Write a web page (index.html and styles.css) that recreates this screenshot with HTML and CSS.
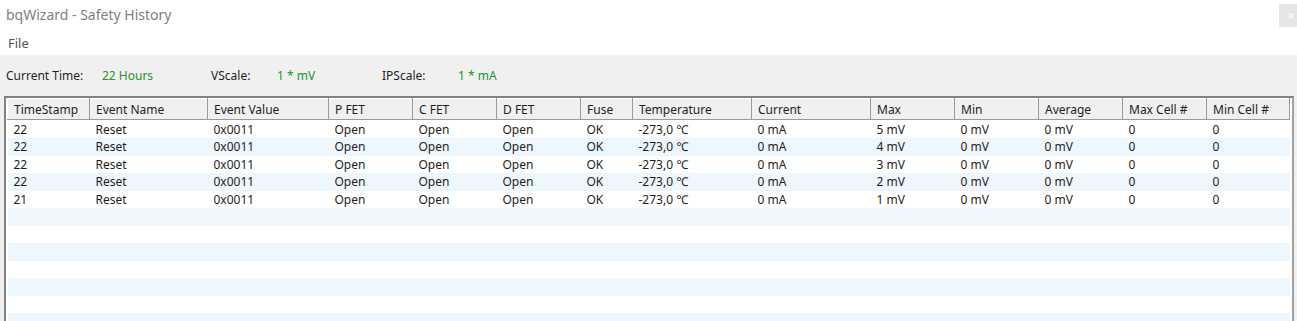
FILE: index.html
```html
<!DOCTYPE html>
<html lang="en">

<head>
  <meta charset="utf-8">
  <title>bqWizard - Safety History</title>
  <link rel="stylesheet" href="styles.css">
</head>

<body>
  <div class="titlebar">
    <span class="title">bqWizard - Safety History</span>
    <span class="close">&#x2715;</span>
  </div>
  <div class="menubar">
    <span>File</span>
  </div>
  <div class="panel">
    <div class="info">
      <span class="label l1">Current Time:</span><span class="value v1">22 Hours</span>
      <span class="label l2">VScale:</span><span class="value v2">1 * mV</span>
      <span class="label l3">IPScale:</span><span class="value">1 * mA</span>
    </div>
    <div class="grid">
      <table>
        <colgroup>
          <col style="width:82px"><col style="width:118px"><col style="width:121px">
          <col style="width:84px"><col style="width:84px"><col style="width:84px">
          <col style="width:52px"><col style="width:119px"><col style="width:119px">
          <col style="width:84px"><col style="width:84px"><col style="width:84px">
          <col style="width:84px"><col style="width:83px">
        </colgroup>
        <thead>
          <tr>
            <th>TimeStamp</th><th>Event Name</th><th>Event Value</th><th>P FET</th><th>C FET</th>
            <th>D FET</th><th>Fuse</th><th>Temperature</th><th>Current</th><th>Max</th>
            <th>Min</th><th>Average</th><th>Max Cell #</th><th>Min Cell #</th>
          </tr>
        </thead>
        <tbody>
          <tr><td>22</td><td>Reset</td><td>0x0011</td><td>Open</td><td>Open</td><td>Open</td><td>OK</td><td>-273,0 &#8451;</td><td>0 mA</td><td>5 mV</td><td>0 mV</td><td>0 mV</td><td>0</td><td>0</td></tr>
          <tr><td>22</td><td>Reset</td><td>0x0011</td><td>Open</td><td>Open</td><td>Open</td><td>OK</td><td>-273,0 &#8451;</td><td>0 mA</td><td>4 mV</td><td>0 mV</td><td>0 mV</td><td>0</td><td>0</td></tr>
          <tr><td>22</td><td>Reset</td><td>0x0011</td><td>Open</td><td>Open</td><td>Open</td><td>OK</td><td>-273,0 &#8451;</td><td>0 mA</td><td>3 mV</td><td>0 mV</td><td>0 mV</td><td>0</td><td>0</td></tr>
          <tr><td>22</td><td>Reset</td><td>0x0011</td><td>Open</td><td>Open</td><td>Open</td><td>OK</td><td>-273,0 &#8451;</td><td>0 mA</td><td>2 mV</td><td>0 mV</td><td>0 mV</td><td>0</td><td>0</td></tr>
          <tr><td>21</td><td>Reset</td><td>0x0011</td><td>Open</td><td>Open</td><td>Open</td><td>OK</td><td>-273,0 &#8451;</td><td>0 mA</td><td>1 mV</td><td>0 mV</td><td>0 mV</td><td>0</td><td>0</td></tr>
          <tr class="empty"><td colspan="14"></td></tr>
          <tr class="empty"><td colspan="14"></td></tr>
          <tr class="empty"><td colspan="14"></td></tr>
          <tr class="empty"><td colspan="14"></td></tr>
          <tr class="empty"><td colspan="14"></td></tr>
          <tr class="empty"><td colspan="14"></td></tr>
          <tr class="empty"><td colspan="14"></td></tr>
        </tbody>
      </table>
    </div>
  </div>
</body>

</html>
```

FILE: styles.css
```css
* {
  margin: 0;
  padding: 0;
  box-sizing: border-box;
}

html, body {
  height: 321px;
  overflow: hidden;
}

body {
  background: #fff;
  font-family: 'Noto Sans', 'DejaVu Sans', sans-serif;
  font-size: 12px;
  color: #1e1e1e;
}

.titlebar {
  height: 32px;
  display: flex;
  align-items: flex-start;
  justify-content: space-between;
}

.title {
  padding: 5px 0 0 6px;
  font-size: 14px;
  color: #808080;
}

.close {
  margin-top: 4px;
  width: 18px;
  height: 23px;
  background: #e5e5e5;
  color: #fff;
  font-size: 9px;
  display: flex;
  align-items: center;
  justify-content: center;
  padding-left: 6px;
}

.menubar {
  height: 23px;
  padding: 2px 0 0 8px;
  font-size: 13px;
  color: #555;
}

.panel {
  background: #f0f0f0;
  height: 266px;
  padding-top: 9px;
  overflow: hidden;
}

.info {
  height: 32px;
  padding: 0 0 10px 6px;
  display: flex;
  align-items: center;
}

.label.l1 { width: 96px; }
.label.l2 { width: 66px; }
.label.l3 { width: 76px; }

.value { color: #22952a; }
.value.v1 { width: 109px; }
.value.v2 { width: 105px; }

.grid {
  margin-left: 4px;
  width: 1290px;
  height: 250px;
  border-top: 2px solid #828282;
  border-left: 2px solid #828282;
  border-right: 2px solid #a0a0a0;
  background: #fff;
  overflow: hidden;
  padding-left: 1px;
}

table {
  table-layout: fixed;
  border-collapse: collapse;
  width: 1282px;
}

th {
  height: 21px;
  text-align: left;
  font-weight: normal;
  background: #f0f0f0;
  padding: 0 0 0 6px;
  border-top: 1px solid #fff;
  border-left: 1px solid #fff;
  border-right: 1px solid #9a9a9a;
  border-bottom: 1px solid #9a9a9a;
  white-space: nowrap;
  overflow: hidden;
}

td {
  height: 17.5px;
  padding: 0 0 0 6px;
  white-space: nowrap;
  line-height: 17px;
}

thead + tbody tr:first-child td {
  padding-top: 1px;
}

tbody tr:nth-child(even) {
  background: #eef6fe;
}
```
